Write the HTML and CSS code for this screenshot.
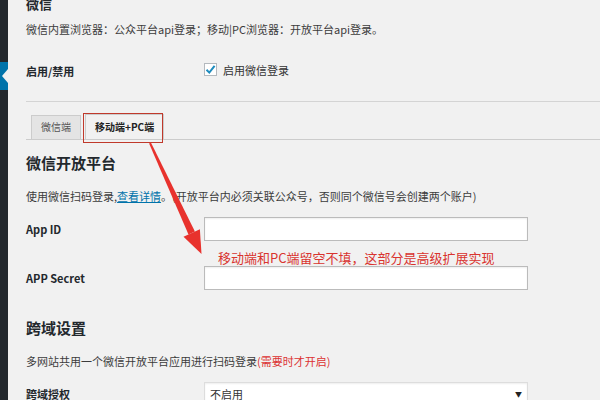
FILE: index.html
```html
<!DOCTYPE html>
<html lang="zh">
<head>
  <meta charset="UTF-8">
  <meta name="viewport" content="width=device-width, initial-scale=1.0">
  <title>微信登录设置</title>
  <link rel="stylesheet" href="styles.css">
</head>
<body>

<div class="admin">
  <div class="sidebar">
    <div class="menu-top"></div>
    <div class="menu-current"></div>
    <div class="menu-rest"></div>
  </div>

  <div class="wrap">
    <h2 class="title title-top">微信</h2>
    <p class="desc">微信内置浏览器：公众平台api登录；移动|PC浏览器：开放平台api登录。</p>

    <div class="row row-toggle">
      <div class="label">启用/禁用</div>
      <div class="field">
        <label class="check">
          <span class="box">
            <svg width="11" height="11" viewBox="0 0 11 11"><path d="M1.5 5.8 L4.3 8.6 L9.6 1.8" fill="none" stroke="#1e8cbe" stroke-width="2"/></svg>
          </span>
          启用微信登录
        </label>
      </div>
    </div>

    <hr class="sep">

    <div class="tabs">
      <span class="tab">微信端</span>
      <span class="tab active">移动端+PC端</span>
      <span class="mark"></span>
    </div>

    <h2 class="title">微信开放平台</h2>
    <p class="desc">使用微信扫码登录,<a href="#">查看详情</a>。(开放平台内必须关联公众号，否则同个微信号会创建两个账户)</p>

    <div class="form">
      <div class="row">
        <div class="label">App ID</div>
        <div class="field"><span class="input"></span></div>
      </div>
      <div class="row">
        <div class="label">APP Secret</div>
        <div class="field"><span class="input"></span></div>
      </div>
      <p class="note">移动端和PC端留空不填，这部分是高级扩展实现</p>
    </div>

    <h2 class="title title-cross">跨域设置</h2>
    <p class="desc">多网站共用一个微信开放平台应用进行扫码登录<span class="warn">(需要时才开启)</span></p>

    <div class="row row-select">
      <div class="label">跨域授权</div>
      <div class="field">
        <div class="select">不启用<span class="caret">▼</span></div>
      </div>
    </div>
  </div>

  <!-- 标注箭头 -->
  <svg class="arrow" width="600" height="400" viewBox="0 0 600 400">
    <polygon points="149.1,143.4 150.9,142.6 194.9,231.5 188.5,234.5" fill="#e8322d"/>
    <polygon points="183.5,236.8 199.9,229.2 201.5,254" fill="#e8322d"/>
  </svg>
</div>

</body>
</html>
```

FILE: styles.css
```css
* {
  margin: 0;
  padding: 0;
  box-sizing: border-box;
}
html, body {
  width: 600px;
  height: 400px;
  overflow: hidden;
}
body {
  font-family: "Noto Sans CJK SC", "Liberation Sans", sans-serif;
  background-color: #f1f1f1;
  color: #333;
}
.admin {
  position: relative;
  display: flex;
  height: 400px;
}
.sidebar {
  width: 8px;
  flex: none;
  display: flex;
  flex-direction: column;
}
.menu-top { height: 62px; background-color: #23282d; }
.menu-current {
  position: relative;
  height: 28px;
  background-color: #0073aa;
}
.menu-current::after {
  content: "";
  position: absolute;
  right: 0;
  top: 7px;
  border-style: solid;
  border-width: 7px 6px 7px 0;
  border-color: transparent #f1f1f1 transparent transparent;
}
.menu-rest { flex: 1; background-color: #23282d; }

.wrap {
  flex: 1;
  padding-left: 18px;
  margin-top: -6px;
}
.title {
  font-size: 15px;
  line-height: 22px;
  font-weight: 700;
  color: #23282d;
  margin-top: 12px;
}
.title-top {
  font-size: 13px;
  line-height: 20px;
  margin-top: 0;
}
.title-cross { margin-top: 27px; }
.desc {
  font-size: 11px;
  line-height: 16px;
  margin-top: 14px;
  color: #3c3c3c;
  white-space: nowrap;
}
.title-top + .desc { margin-top: 7px; }
.desc a { color: #0073aa; }
.warn { color: #dc3232; }

.row {
  display: flex;
  align-items: center;
  height: 24px;
}
.label {
  width: 178px;
  flex: none;
  font-size: 11px;
  font-weight: 700;
  color: #23282d;
}
.row-toggle {
  height: 30px;
  margin-top: 19px;
}
.check {
  display: flex;
  align-items: center;
  gap: 6px;
  font-size: 11px;
  color: #333;
  margin-top: -3px;
}
.box {
  width: 13px;
  height: 13px;
  background-color: #fff;
  border: 1px solid #b4b9be;
  display: flex;
  align-items: center;
  justify-content: center;
}

.sep {
  border: none;
  border-top: 1px solid #d4d4d4;
  margin-top: 15px;
}

.tabs {
  position: relative;
  display: flex;
  align-items: flex-end;
  gap: 4px;
  height: 27px;
  margin-top: 11px;
  padding-left: 5px;
  border-bottom: 1px solid #ccc;
}
.tab {
  height: 24px;
  line-height: 22px;
  padding: 0 9px;
  font-size: 10px;
  color: #555;
  background-color: #e4e4e4;
  border: 1px solid #ccc;
  border-bottom: none;
}
.tab.active {
  height: 25px;
  line-height: 24px;
  font-weight: 700;
  color: #222;
  background-color: #f1f1f1;
}
.mark {
  position: absolute;
  left: 57px;
  top: 0;
  width: 80px;
  height: 30px;
  border: 1px solid #c0392b;
}

.form {
  position: relative;
  display: flex;
  flex-direction: column;
  gap: 25px;
  margin-top: 13px;
}
.input,
.select {
  display: block;
  width: 324px;
  height: 24px;
  background-color: #fff;
  border: 1px solid #bbb;
  box-shadow: inset 0 1px 2px rgba(0, 0, 0, 0.07);
}
.note {
  position: absolute;
  left: 192px;
  top: 32px;
  font-size: 13px;
  line-height: 18px;
  color: #d9342f;
  white-space: nowrap;
}

.row-select { margin-top: 13px; }
.select {
  position: relative;
  border-color: #ddd;
  font-size: 11px;
  line-height: 22px;
  padding-left: 5px;
  color: #333;
}
.caret {
  position: absolute;
  right: 5px;
  top: 0;
  font-size: 7px;
  color: #222;
}

.arrow {
  position: absolute;
  left: 0;
  top: 0;
}
```
